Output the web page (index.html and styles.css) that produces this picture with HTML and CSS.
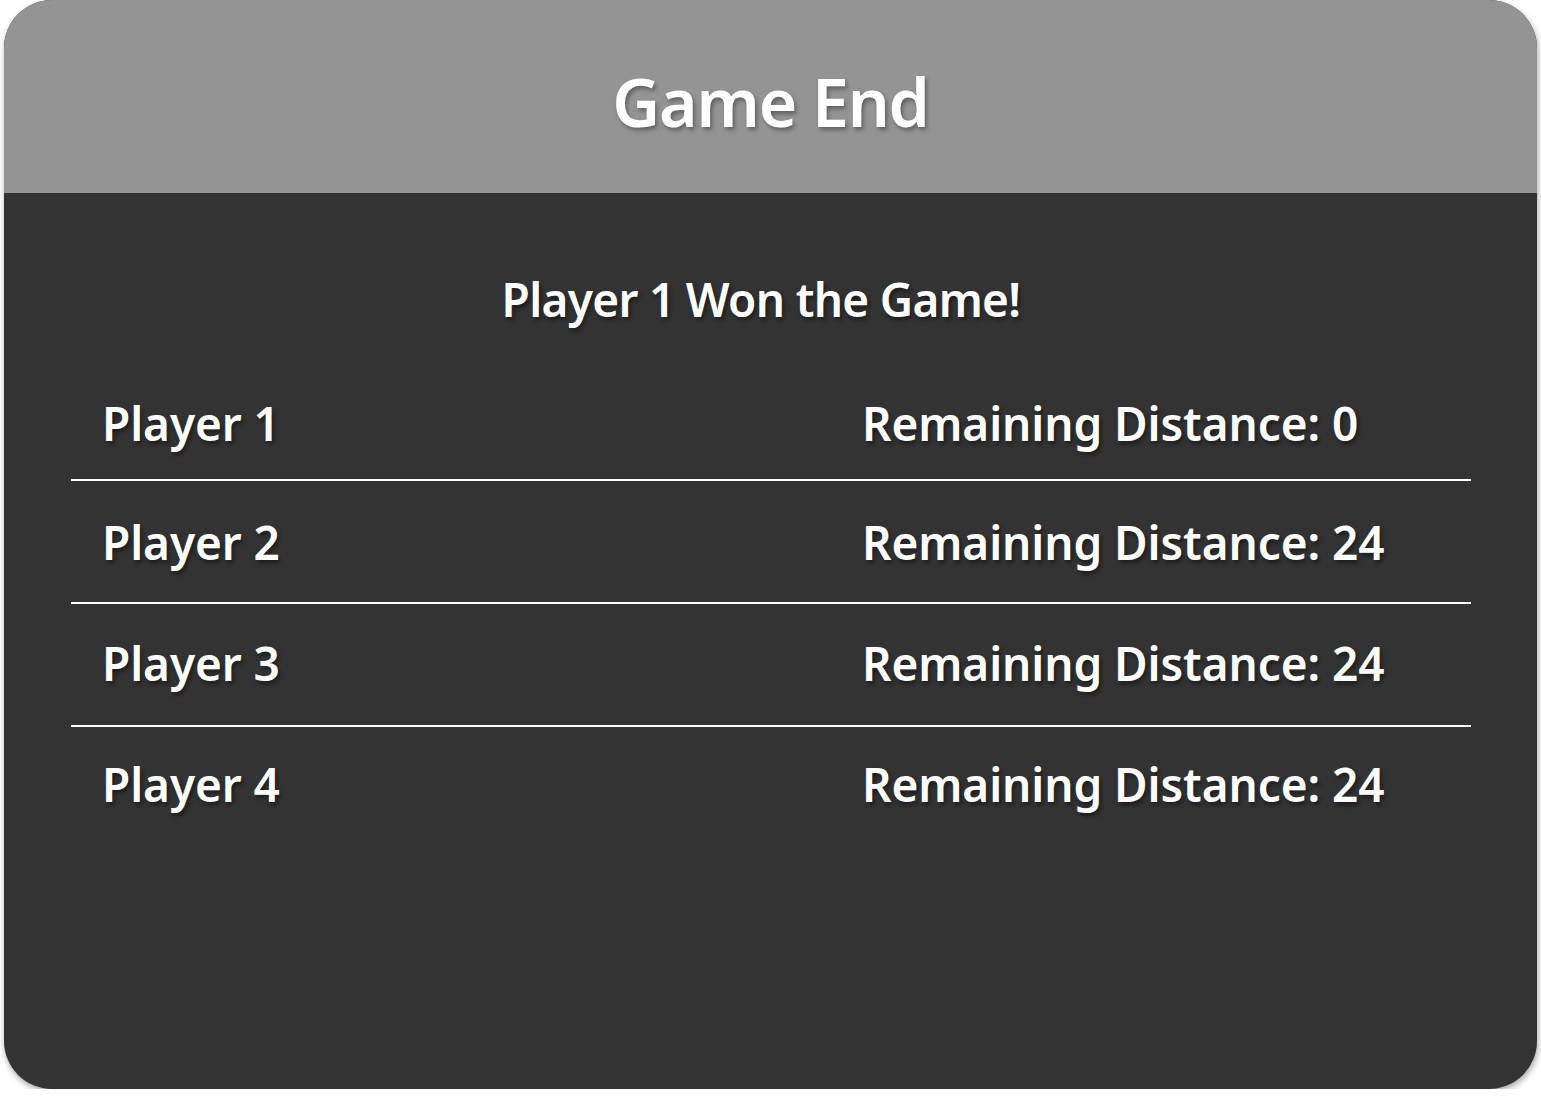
FILE: index.html
```html
<!DOCTYPE html>
<html>
<head>
<meta charset="utf-8">
<link rel="stylesheet" href="styles.css">
</head>
<body>
<div class="card">
  <div class="card-header"><h1 class="title">Game End</h1></div>
  <div class="card-body">
    <h2 class="winner">Player 1 Won the Game!</h2>
    <div class="results">
      <div class="row"><span class="name">Player 1</span><span class="dist">Remaining Distance: 0</span></div>
      <div class="row"><span class="name">Player 2</span><span class="dist">Remaining Distance: 24</span></div>
      <div class="row"><span class="name">Player 3</span><span class="dist">Remaining Distance: 24</span></div>
      <div class="row"><span class="name">Player 4</span><span class="dist">Remaining Distance: 24</span></div>
    </div>
  </div>
</div>
</body>
</html>
```

FILE: styles.css
```css
html, body {
  margin: 0;
  padding: 0;
  background: #ffffff;
}
body {
  font-family: "Noto Sans", "Open Sans", sans-serif;
  color: #ffffff;
}
.card {
  margin: 0 4px;
  width: 1533px;
  height: 1089px;
  border-radius: 48px;
  overflow: hidden;
  background: #333333;
  box-shadow: 1px 3px 6px rgba(0,0,0,0.35);
  display: flex;
  flex-direction: column;
}
.card-header {
  height: 193px;
  background: #949494;
  display: flex;
  align-items: center;
  justify-content: center;
}
.title {
  margin: 0;
  font-size: 66px;
  font-weight: 600;
  letter-spacing: -1.2px;
  text-shadow: 2px 3px 4px rgba(0,0,0,0.35);
  line-height: 1;
  padding-top: 8px;
}
.card-body {
  padding: 76px 66px 0 67px;
}
.winner {
  margin: 0;
  text-align: center;
  font-size: 46px;
  font-weight: 600;
  letter-spacing: -0.7px;
  line-height: 60px;
  padding-right: 20px;
  text-shadow: 2px 3px 4px rgba(0,0,0,0.45);
}
.results {
  margin-top: 38px;
}
.row {
  display: grid;
  grid-template-columns: 791px 1fr;
  align-items: center;
  height: 123px;
  border-bottom: 2px solid #ffffff;
  padding-left: 31px;
  box-sizing: border-box;
  font-size: 46px;
  font-weight: 600;
  letter-spacing: -0.1px;
  text-shadow: 2px 3px 4px rgba(0,0,0,0.45);
}
.row:first-child { height: 114px; }
.row:nth-child(3) { padding-bottom: 3px; }
.row:last-child { border-bottom: none; height: 114px; }
.dist { margin-left: -31px; }
```
